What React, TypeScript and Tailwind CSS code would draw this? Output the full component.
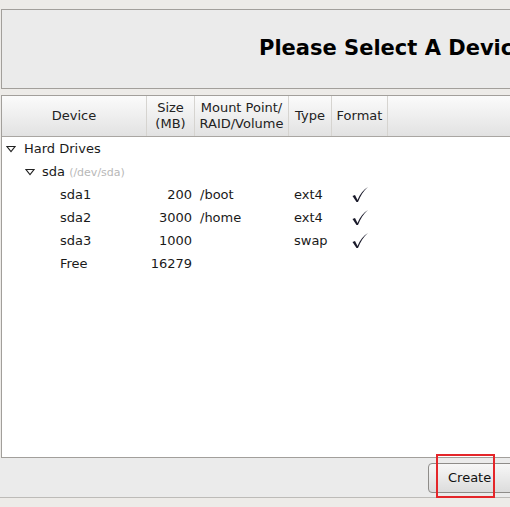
import React from 'react';

const Tri = () => (
  <svg width="10" height="8" viewBox="0 0 10 8" className="shrink-0">
    <path d="M1 1.5 H9 L5 6.5 Z" fill="none" stroke="#222" strokeWidth="1.1" />
  </svg>
);

const Check = () => (
  <svg width="18" height="17" viewBox="0 0 18 17">
    <path d="M1.5 10 L4 9 L6.5 14 C9 8 12.5 3.5 17 1 C12.5 4.5 9.5 9.5 7 16 L5.5 16 Z" fill="#1a1a2a" />
  </svg>
);

const parts = [
  { name: 'sda1', size: '200', mount: '/boot', type: 'ext4', fmt: true },
  { name: 'sda2', size: '3000', mount: '/home', type: 'ext4', fmt: true },
  { name: 'sda3', size: '1000', mount: '', type: 'swap', fmt: true },
  { name: 'Free', size: '16279', mount: '', type: '', fmt: false },
];

export default function App() {
  return (
    <div
      className="w-[510px] h-[507px] overflow-hidden bg-[#edebe8] text-[13px] text-[#1a1a1a]"
      style={{ fontFamily: '"DejaVu Sans", sans-serif' }}
    >
      {/* Title panel */}
      <div className="pt-[9px] pl-[1px]">
        <div className="w-[700px] h-[80px] border border-[#a29f9b] bg-[#ebebeb] flex items-center pl-[257px]">
          <span className="text-[21px] font-bold text-black whitespace-nowrap">Please Select A Device</span>
        </div>
      </div>

      {/* Device table */}
      <div className="mt-[6px] pl-[1px]">
        <div className="w-[700px] h-[363px] border border-[#a29f9b] bg-white">
          <div className="h-[41px] flex border-b border-[#a9a6a2] bg-gradient-to-b from-[#fbfbfb] to-[#e2e2e2] text-[#222]">
            <div className="w-[145px] flex items-center justify-center border-r border-[#d6d4d0]">Device</div>
            <div className="w-[48px] flex flex-col items-center justify-center leading-[16px] border-r border-[#d6d4d0]">
              <span>Size</span>
              <span>(MB)</span>
            </div>
            <div className="w-[94px] flex flex-col items-center justify-center leading-[16px] border-r border-[#d6d4d0]">
              <span>Mount Point/</span>
              <span>RAID/Volume</span>
            </div>
            <div className="w-[43px] flex items-center justify-center border-r border-[#d6d4d0]">Type</div>
            <div className="w-[56px] flex items-center justify-center border-r border-[#d6d4d0]">Format</div>
          </div>

          <div>
            <div className="h-[23px] flex items-center pl-[4px] gap-[8px]">
              <Tri />
              <span>Hard Drives</span>
            </div>
            <div className="h-[23px] flex items-center pl-[23px] gap-[7px]">
              <Tri />
              <span>
                sda <span className="text-[11px] text-[#b8b8b8]">(/dev/sda)</span>
              </span>
            </div>
            {parts.map((p) => (
              <div key={p.name} className="h-[23px] flex items-center">
                <span className="w-[145px] pl-[58px]">{p.name}</span>
                <span className="w-[45px] text-right">{p.size}</span>
                <span className="w-[96px] pl-[8px]">{p.mount}</span>
                <span className="w-[56px] pl-[6px]">{p.type}</span>
                <span className="w-[32px] flex justify-center">{p.fmt && <Check />}</span>
              </div>
            ))}
          </div>
        </div>
      </div>

      {/* Button bar */}
      <div className="h-[40px] bg-[#ebebeb] border-b border-[#bdbbb8] flex items-center pl-[428px]">
        <div className="relative">
          <button className="h-[30px] w-[100px] rounded-[4px] border border-[#8e8c89] bg-gradient-to-b from-[#f7f7f7] to-[#dcdcdc] text-left pl-[19px] text-[#111]">
            Create
          </button>
          <div className="absolute left-[8px] top-[-9px] w-[59px] h-[44px] border-2 border-[#e4262a]" />
        </div>
      </div>
    </div>
  );
}
